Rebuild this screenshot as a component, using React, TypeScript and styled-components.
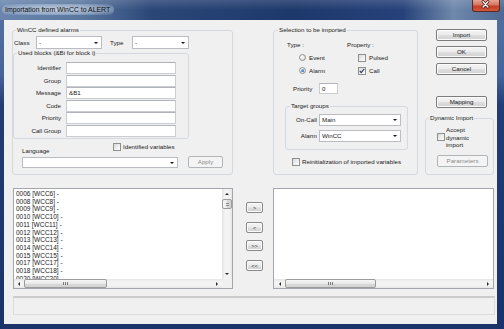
import React, {FunctionComponent} from 'react';
import styled, {createGlobalStyle} from "styled-components";

const blockFields = [
    {label: "Identifier", value: ""},
    {label: "Group", value: ""},
    {label: "Message", value: "&B1"},
    {label: "Code", value: ""},
    {label: "Priority", value: ""},
    {label: "Call Group", value: ""},
];

const alarmItems = [6, 8, 9, 10, 11, 12, 13, 14, 15, 17, 18, 20]
    .map(n => `${String(n).padStart(4, "0")} [WCC${n}] -`);

const ImportDialog: FunctionComponent = () => {
    return (
        <Window>
            <TitleBar>
                <Title>Importation from WinCC to ALERT</Title>
                <CloseButton>
                    <svg width={28} height={12} viewBox="0 0 28 12">
                        <path d="M11.5 2.5 L16.5 8 M16.5 2.5 L11.5 8" stroke="#4a1510" strokeWidth={3} strokeLinecap="round"/>
                        <path d="M11.5 2.5 L16.5 8 M16.5 2.5 L11.5 8" stroke="#ffffff" strokeWidth={1.5} strokeLinecap="round"/>
                    </svg>
                </CloseButton>
            </TitleBar>
            <Client>
                <TopRow>
                    <GroupBox $w={221} $h={149}>
                        <Legend $indent={3}>WinCC defined alarms</Legend>
                        <ClassRow>
                            <InlineLabel $w={22}>Class</InlineLabel>
                            <Combo $w={66} $h={13}><ComboValue>-</ComboValue><DropArrow/></Combo>
                            <InlineLabel $w={22} $ml={8}>Type</InlineLabel>
                            <Combo $w={57} $h={13}><ComboValue>-</ComboValue><DropArrow/></Combo>
                        </ClassRow>
                        <GroupBox $w={176} $h={90}>
                            <Legend $indent={3}>Used blocks (&amp;Bi for block i)</Legend>
                            <FieldList>
                                {blockFields.map(f => (
                                    <FieldRow key={f.label}>
                                        <FieldLabel>{f.label}</FieldLabel>
                                        <TextField $w={110} $h={12}>{f.value}</TextField>
                                    </FieldRow>
                                ))}
                            </FieldList>
                        </GroupBox>
                        <OptionsRow>
                            <LanguageLabel>Language</LanguageLabel>
                            <CheckField>
                                <CheckBox/>
                                <CheckText>Identified variables</CheckText>
                            </CheckField>
                        </OptionsRow>
                        <LanguageRow>
                            <Combo $w={156} $h={11}><ComboValue/><DropArrow/></Combo>
                            <Button $w={35} $h={12} $ml={10} disabled>Apply</Button>
                        </LanguageRow>
                    </GroupBox>

                    <SelectionGroup $w={145} $h={149}>
                        <Legend $indent={4}>Selection to be imported</Legend>
                        <TypePropRow>
                            <OptionColumn $w={60}>
                                <Heading>Type :</Heading>
                                <OptionList $indent={12}>
                                    <OptionRow><Radio/><OptionText>Event</OptionText></OptionRow>
                                    <OptionRow><Radio $checked/><OptionText>Alarm</OptionText></OptionRow>
                                </OptionList>
                            </OptionColumn>
                            <OptionColumn $w={60}>
                                <Heading>Property :</Heading>
                                <OptionList $indent={11}>
                                    <OptionRow><CheckBox/><OptionText>Pulsed</OptionText></OptionRow>
                                    <OptionRow>
                                        <CheckBox>
                                            <svg width={6} height={6} viewBox="0 0 6 6">
                                                <path d="M0.8 3 L2.3 4.6 L5.2 0.9" fill="none" stroke="#2c3c5c" strokeWidth={1.1}/>
                                            </svg>
                                        </CheckBox>
                                        <OptionText>Call</OptionText>
                                    </OptionRow>
                                </OptionList>
                            </OptionColumn>
                        </TypePropRow>
                        <PriorityRow>
                            <InlineLabel $w={26}>Priority</InlineLabel>
                            <TextField $w={19} $h={11}>0</TextField>
                        </PriorityRow>
                        <TargetGroup $w={123} $h={48}>
                            <Legend $indent={4}>Target groups</Legend>
                            <TargetList>
                                <FieldRow>
                                    <TargetLabel>On-Call</TargetLabel>
                                    <Combo $w={82} $h={12}><ComboValue>Main</ComboValue><DropArrow/></Combo>
                                </FieldRow>
                                <FieldRow>
                                    <TargetLabel>Alarm</TargetLabel>
                                    <Combo $w={82} $h={12}><ComboValue>WinCC</ComboValue><DropArrow/></Combo>
                                </FieldRow>
                            </TargetList>
                        </TargetGroup>
                        <ReinitRow>
                            <CheckBox/>
                            <CheckText>Reinitialization of imported variables</CheckText>
                        </ReinitRow>
                    </SelectionGroup>

                    <SideColumn>
                        <Button $w={51} $h={12} $ml={11}>Import</Button>
                        <Button $w={51} $h={12} $ml={11} $mt={5}>OK</Button>
                        <Button $w={51} $h={12} $ml={11} $mt={5}>Cancel</Button>
                        <Button $w={51} $h={12} $ml={11} $mt={21}>Mapping</Button>
                        <DynamicGroup $w={69} $h={61}>
                            <Legend $indent={3}>Dynamic Import</Legend>
                            <DynamicRow>
                                <CheckBox/>
                                <DynamicText>Accept<br/>dynamic<br/>import</DynamicText>
                            </DynamicRow>
                            <Button $w={51} $h={12} $ml={11} $mt={6} disabled>Parameters</Button>
                        </DynamicGroup>
                    </SideColumn>
                </TopRow>

                <BottomRow>
                    <ListFrame $w={220} $vscroll>
                        <ListItems>
                            {alarmItems.map(item => <ListItem key={item}>{item}</ListItem>)}
                        </ListItems>
                        <VScroll>
                            <ArrowCell $h={10}><ArrowUp/></ArrowCell>
                            <VThumb><VGrip/></VThumb>
                            <ScrollTrack/>
                            <ArrowCell $h={10}><ArrowDown/></ArrowCell>
                        </VScroll>
                        <HScroll>
                            <ArrowCell $w={10}><ArrowLeft/></ArrowCell>
                            <HThumb $size={83}><HGrip/></HThumb>
                            <ScrollTrack/>
                            <ArrowCell $w={10}><ArrowRight/></ArrowCell>
                        </HScroll>
                        <ScrollCorner/>
                    </ListFrame>

                    <TransferColumn>
                        <SmallButton $mt={14}>&gt;</SmallButton>
                        <SmallButton $mt={9}>&lt;</SmallButton>
                        <SmallButton $mt={7}>&gt;&gt;</SmallButton>
                        <SmallButton $mt={9}>&lt;&lt;</SmallButton>
                    </TransferColumn>

                    <ListFrame $w={221} $ml={10}>
                        <ListItems/>
                        <HScroll>
                            <ArrowCell $w={11}><ArrowLeft/></ArrowCell>
                            <HThumb $size={91}><HGrip/></HThumb>
                            <ScrollTrack/>
                            <ArrowCell $w={10}><ArrowRight/></ArrowCell>
                        </HScroll>
                    </ListFrame>
                </BottomRow>

                <StatusBar/>
            </Client>
        </Window>
    );
};

const App: FunctionComponent = () => (
    <>
        <GlobalStyle/>
        <ImportDialog/>
    </>
);

export default App;

const GlobalStyle = createGlobalStyle`
html, body {
  margin: 0;
  padding: 0;
  background: #ffffff;
}
`;

const Window = styled.div`
width: 504px;
height: 329px;
box-sizing: border-box;
display: flex;
flex-direction: column;
overflow: hidden;
background: linear-gradient(180deg, #56749f 0px, #45649a 75px, #213d74 105px, #1a336a 329px);
font-family: "Liberation Sans", Arial, sans-serif;
font-size: 6.2px;
line-height: 8px;
color: #1a1a1a;
`;

const TitleBar = styled.div`
height: 20px;
flex: none;
display: flex;
align-items: flex-start;
justify-content: space-between;
padding: 0 4px 0 2px;
background:
  linear-gradient(180deg, rgba(255,255,255,0.14) 0%, rgba(255,255,255,0) 50%),
  linear-gradient(90deg, #6a86ae 0%, #5a779f 16%, #2b4778 30%, #1d386b 58%, #26427a 80%, #6f88ab 90%, #4d6893 100%);
`;

const Title = styled.span`
margin-top: 4px;
padding: 1px 4px 1px 3px;
line-height: 9px;
font-size: 6.9px;
color: #0d0d0d;
white-space: nowrap;
border-radius: 6px;
background: radial-gradient(ellipse at center, rgba(226,234,244,0.75) 0%, rgba(200,214,232,0.5) 60%, rgba(160,180,210,0) 100%);
`;

const CloseButton = styled.div`
width: 28px;
height: 12px;
box-sizing: border-box;
border: 1px solid #5b2a24;
border-top: none;
border-radius: 0 0 3px 3px;
background: linear-gradient(180deg, #e6a496 0%, #d5745f 45%, #c43e22 55%, #d2573a 100%);
display: flex;
svg { margin: -1px 0 0 -1px; }
`;

const Client = styled.div`
flex: 1;
margin: 0 7px 5px 4px;
padding: 6px 0 0 8px;
background: #f0f0f0;
display: flex;
flex-direction: column;
`;

const TopRow = styled.div`
display: flex;
align-items: flex-start;
height: 149px;
`;

const GroupBox = styled.fieldset<{ $w: number; $h: number }>`
box-sizing: border-box;
width: ${p => p.$w}px;
height: ${p => p.$h}px;
min-width: 0;
margin: 0;
padding: 0;
border: 1px solid #d3d9de;
border-radius: 3px;
flex: none;
`;

const SelectionGroup = styled(GroupBox)`
margin-left: 40px;
`;

const TargetGroup = styled(GroupBox)`
margin: 8px 0 0 11px;
`;

const DynamicGroup = styled(GroupBox)`
margin-top: 6px;
`;

const Legend = styled.legend<{ $indent: number }>`
margin-left: ${p => p.$indent}px;
padding: 0 1px;
height: 8px;
line-height: 8px;
white-space: nowrap;
`;

const InlineLabel = styled.span<{ $w: number; $ml?: number }>`
width: ${p => p.$w}px;
margin-left: ${p => p.$ml ?? 0}px;
flex: none;
white-space: nowrap;
`;

const ClassRow = styled.div`
display: flex;
align-items: center;
height: 13px;
margin-top: 2px;
padding-left: 1px;
`;

const Combo = styled.div<{ $w: number; $h: number }>`
box-sizing: border-box;
width: ${p => p.$w}px;
height: ${p => p.$h}px;
flex: none;
display: flex;
align-items: center;
padding: 0 3px 0 2px;
background: #ffffff;
border: 1px solid #b9bcc1;
`;

const ComboValue = styled.span`
flex: 1;
white-space: nowrap;
overflow: hidden;
`;

const DropArrow = styled.span`
width: 0;
height: 0;
border-left: 2px solid transparent;
border-right: 2px solid transparent;
border-top: 2.5px solid #151515;
`;

const TextField = styled.div<{ $w: number; $h: number }>`
box-sizing: border-box;
width: ${p => p.$w}px;
height: ${p => p.$h}px;
flex: none;
padding: 0 2px;
line-height: ${p => p.$h - 2}px;
background: #ffffff;
border: 1px solid #c9ccd1;
border-top-color: #b0b3b9;
white-space: nowrap;
`;

const FieldList = styled.div`
display: flex;
flex-direction: column;
gap: 0.5px;
padding-top: 5px;
`;

const FieldRow = styled.div`
display: flex;
align-items: center;
height: 12px;
`;

const FieldLabel = styled.span`
width: 47px;
margin-right: 5px;
text-align: right;
white-space: nowrap;
flex: none;
`;

const OptionsRow = styled.div`
display: flex;
height: 13px;
margin-top: 3px;
padding-left: 9px;
`;

const LanguageLabel = styled.span`
width: 91px;
align-self: flex-end;
flex: none;
`;

const CheckField = styled.div`
display: flex;
align-items: center;
align-self: flex-start;
height: 9px;
`;

const CheckBox = styled.span`
box-sizing: border-box;
width: 8px;
height: 8px;
flex: none;
display: inline-flex;
align-items: center;
justify-content: center;
border: 1px solid #8e8f8f;
background: linear-gradient(135deg, #d9d9d9 0%, #f4f4f4 70%, #ffffff 100%);
`;

const CheckText = styled.span`
margin-left: 2px;
white-space: nowrap;
`;

const LanguageRow = styled.div`
display: flex;
align-items: flex-end;
height: 12px;
margin-top: 1px;
padding-left: 9px;
`;

const Button = styled.button<{ $w: number; $h: number; $ml?: number; $mt?: number }>`
box-sizing: border-box;
width: ${p => p.$w}px;
height: ${p => p.$h}px;
margin: ${p => p.$mt ?? 0}px 0 0 ${p => p.$ml ?? 0}px;
padding: 0;
flex: none;
display: block;
border: 1px solid #7d7d7d;
border-radius: 2px;
background: linear-gradient(180deg, #f4f4f4 0%, #ececec 48%, #dedede 52%, #d2d2d2 100%);
box-shadow: inset 0 0 0 1px #fbfbfb;
font: inherit;
line-height: 8px;
color: #1a1a1a;
&:disabled {
  border-color: #b2b6b9;
  background: #f4f4f4;
  box-shadow: none;
  color: #8c8c8c;
}
`;

const TypePropRow = styled.div`
display: flex;
margin-top: 7px;
padding-left: 13px;
`;

const OptionColumn = styled.div<{ $w: number }>`
width: ${p => p.$w}px;
flex: none;
`;

const Heading = styled.div`
height: 8px;
white-space: nowrap;
`;

const OptionList = styled.div<{ $indent: number }>`
display: flex;
flex-direction: column;
gap: 4px;
margin-top: 4px;
padding-left: ${p => p.$indent}px;
`;

const OptionRow = styled.div`
display: flex;
align-items: center;
height: 9px;
`;

const OptionText = styled.span`
margin-left: 3px;
white-space: nowrap;
`;

const Radio = styled.span<{ $checked?: boolean }>`
box-sizing: border-box;
width: 7px;
height: 7px;
flex: none;
border-radius: 50%;
display: inline-flex;
align-items: center;
justify-content: center;
border: 1px solid #8e8f8f;
background: radial-gradient(circle at 35% 35%, #ffffff 0%, #e6e6e6 55%, #cfcfcf 100%);
&::after {
  content: "";
  display: ${p => p.$checked ? "block" : "none"};
  width: 3px;
  height: 3px;
  border-radius: 50%;
  background: radial-gradient(circle at 35% 35%, #9cc8f0 0%, #2a64b0 70%, #173f7a 100%);
}
`;

const PriorityRow = styled.div`
display: flex;
align-items: center;
height: 11px;
margin-top: 8px;
padding-left: 19px;
`;

const TargetList = styled.div`
display: flex;
flex-direction: column;
gap: 4px;
padding-top: 4px;
`;

const TargetLabel = styled.span`
width: 31px;
margin-right: 2px;
text-align: right;
white-space: nowrap;
flex: none;
`;

const ReinitRow = styled.div`
display: flex;
align-items: center;
height: 8px;
margin-top: 8px;
padding-left: 18px;
`;

const SideColumn = styled.div`
width: 69px;
margin-left: 7px;
padding-top: 3px;
display: flex;
flex-direction: column;
flex: none;
`;

const DynamicRow = styled.div`
display: flex;
align-items: center;
margin-top: 4px;
padding-left: 11px;
`;

const DynamicText = styled.span`
margin-left: 1px;
line-height: 7.5px;
`;

const BottomRow = styled.div`
display: flex;
align-items: flex-start;
height: 101px;
margin: 13px 0 0 1px;
`;

const ListFrame = styled.div<{ $w: number; $ml?: number; $vscroll?: boolean }>`
box-sizing: border-box;
width: ${p => p.$w}px;
height: 101px;
margin-left: ${p => p.$ml ?? 0}px;
flex: none;
display: grid;
grid-template-columns: ${p => p.$vscroll ? "1fr 10px" : "1fr"};
grid-template-rows: 1fr 9px;
border: 1px solid #a3a7ad;
background: #ffffff;
`;

const ListItems = styled.div`
overflow: hidden;
padding: 1px 0 0 2px;
font-size: 6.5px;
line-height: 7.7px;
`;

const ListItem = styled.div`
white-space: nowrap;
`;

const VScroll = styled.div`
display: flex;
flex-direction: column;
background: linear-gradient(90deg, #e4e4e4 0%, #f3f3f3 30%, #f3f3f3 70%, #e6e6e6 100%);
`;

const HScroll = styled.div`
display: flex;
background: linear-gradient(180deg, #e4e4e4 0%, #f3f3f3 30%, #f3f3f3 70%, #e6e6e6 100%);
`;

const ScrollTrack = styled.div`
flex: 1;
`;

const ScrollCorner = styled.div`
background: #f0f0f0;
`;

const ArrowCell = styled.div<{ $w?: number; $h?: number }>`
${p => p.$w ? `width: ${p.$w}px;` : ""}
${p => p.$h ? `height: ${p.$h}px;` : ""}
flex: none;
display: flex;
align-items: center;
justify-content: center;
`;

const ArrowUp = styled.span`
border-left: 2px solid transparent;
border-right: 2px solid transparent;
border-bottom: 2px solid #2a2a2a;
`;

const ArrowDown = styled.span`
border-left: 2px solid transparent;
border-right: 2px solid transparent;
border-top: 2px solid #2a2a2a;
`;

const ArrowLeft = styled.span`
border-top: 2px solid transparent;
border-bottom: 2px solid transparent;
border-right: 2px solid #2a2a2a;
`;

const ArrowRight = styled.span`
border-top: 2px solid transparent;
border-bottom: 2px solid transparent;
border-left: 2px solid #2a2a2a;
`;

const HThumb = styled.div<{ $size: number }>`
box-sizing: border-box;
width: ${p => p.$size}px;
flex: none;
display: flex;
align-items: center;
justify-content: center;
border: 1px solid #9b9b9b;
border-radius: 2px;
background: linear-gradient(180deg, #f6f6f6 0%, #e9e9e9 50%, #d9d9d9 51%, #d2d2d2 100%);
`;

const VThumb = styled.div`
box-sizing: border-box;
height: 10px;
flex: none;
display: flex;
align-items: center;
justify-content: center;
border: 1px solid #9b9b9b;
border-radius: 2px;
background: linear-gradient(90deg, #f6f6f6 0%, #e9e9e9 50%, #d9d9d9 51%, #d2d2d2 100%);
`;

const HGrip = styled.span`
width: 5px;
height: 3px;
background: repeating-linear-gradient(90deg, #7a7a7a 0 1px, transparent 1px 2px);
`;

const VGrip = styled.span`
width: 3px;
height: 3px;
background: repeating-linear-gradient(180deg, #8a8a8a 0 1px, transparent 1px 2px);
`;

const TransferColumn = styled.div`
display: flex;
flex-direction: column;
width: 17px;
margin-left: 13px;
flex: none;
`;

const SmallButton = styled.button<{ $mt: number }>`
box-sizing: border-box;
width: 17px;
height: 11px;
margin: ${p => p.$mt}px 0 0 0;
padding: 0;
border: 1px solid #8a8a8a;
border-radius: 2px;
background: linear-gradient(180deg, #f4f4f4 0%, #ececec 48%, #dedede 52%, #d2d2d2 100%);
box-shadow: inset 0 0 0 1px #fbfbfb;
font: inherit;
font-size: 5.5px;
line-height: 8px;
color: #333333;
`;

const StatusBar = styled.div`
box-sizing: border-box;
width: 482px;
height: 19px;
margin: 7px 0 0 1px;
border: 1px solid #dcdcdc;
border-top: 2px solid #cbcbcb;
background: #f0f0f0;
`;
